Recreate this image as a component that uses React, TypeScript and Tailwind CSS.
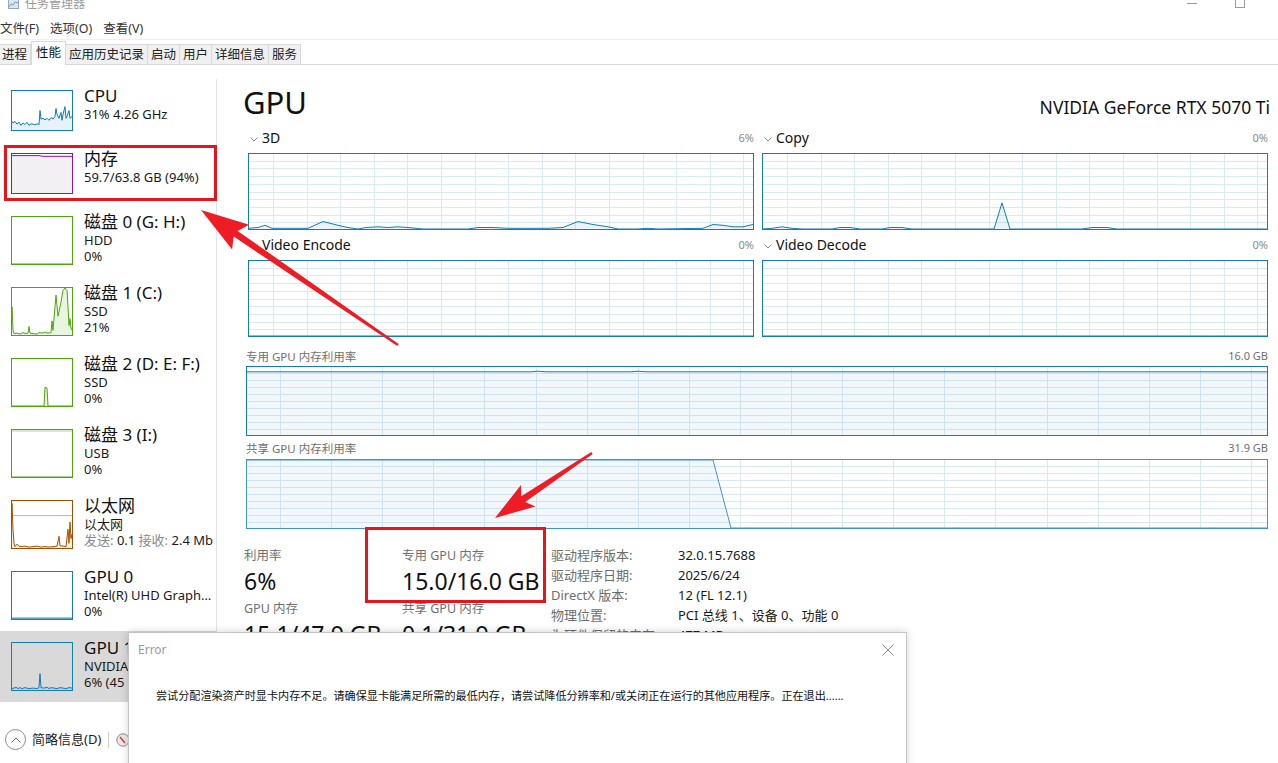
import React from 'react'

type P = [number, number]

const BLUE = '#117dbb'

function Chart({
  w,
  h,
  stroke,
  fill,
  pts,
  colStep = 0,
  colStart = 0,
  rows = 0,
  gridColor = '#d9eaf4',
  refLine,
}: {
  w: number
  h: number
  stroke: string
  fill: string
  pts: P[]
  colStep?: number
  colStart?: number
  rows?: number
  gridColor?: string
  refLine?: number
}) {
  const y = (v: number) => h - 1 - (v / 100) * (h - 2)
  const line = pts.map(([x, v], i) => `${i ? 'L' : 'M'}${x},${y(v).toFixed(1)}`).join(' ')
  const area = `${line} L${pts[pts.length - 1][0]},${h - 1} L${pts[0][0]},${h - 1} Z`
  const vx: number[] = []
  if (colStep) for (let x = colStart; x < w - 1; x += colStep) vx.push(Math.round(x) + 0.5)
  const hy: number[] = []
  for (let i = 1; i < rows; i++) hy.push(Math.round((i * h) / rows) + 0.5)
  return (
    <svg width={w} height={h} className="block shrink-0">
      {vx.map(x => (
        <line key={'v' + x} x1={x} y1={0} x2={x} y2={h} stroke={gridColor} />
      ))}
      {hy.map(yy => (
        <line key={'h' + yy} x1={0} y1={yy} x2={w} y2={yy} stroke={gridColor} />
      ))}
      {refLine !== undefined && (
        <line x1={0} y1={y(refLine) + 0.5} x2={w} y2={y(refLine) + 0.5} stroke={stroke} strokeOpacity={0.45} />
      )}
      <path d={area} fill={fill} />
      <path d={line} fill="none" stroke={stroke} strokeWidth={1} strokeLinejoin="round" />
      <rect x={0.5} y={0.5} width={w - 1} height={h - 1} fill="none" stroke={stroke} />
    </svg>
  )
}

function SideItem({
  title,
  lines,
  thumb,
  selected,
}: {
  title: string
  lines: React.ReactNode[]
  thumb: React.ReactNode
  selected?: boolean
}) {
  return (
    <div className={`flex items-start py-[11px] pl-[11px] ${selected ? 'bg-[#d9d9d9]' : ''}`}>
      {thumb}
      <div className="ml-[11px] -mt-[4px] min-w-0 flex-1 pr-[2px]">
        <div className="text-[17px] leading-[20px] text-[#111] whitespace-nowrap">{title}</div>
        {lines.map((l, i) => (
          <div key={i} className="text-[13px] leading-[16px] text-[#1a1a1a] whitespace-nowrap overflow-hidden text-ellipsis">
            {l}
          </div>
        ))}
      </div>
    </div>
  )
}

function Chevron() {
  return (
    <svg width="8" height="5" viewBox="0 0 8 5" className="block">
      <path d="M0.5 0.5 L4 4 L7.5 0.5" fill="none" stroke="#8a8a8a" strokeWidth="1" />
    </svg>
  )
}

function EngineBlock({ name, pct, pts }: { name: string; pct: string; pts: P[] }) {
  return (
    <div>
      <div className="flex items-center h-[20px] mb-[5px]">
        <div className="ml-[2px] mr-[4px] mt-[2px]">
          <Chevron />
        </div>
        <span className="text-[14px] leading-[20px] text-[#111]">{name}</span>
        <span className="ml-auto text-[11px] text-[#8a8a8a]">{pct}</span>
      </div>
      <Chart w={506} h={77} stroke={BLUE} fill="rgba(17,125,187,0.09)" pts={pts} colStep={33.6} colStart={25} rows={10} />
    </div>
  )
}

function arrow(t: P, p: P, L: number, W: number, t0: number, t1: number) {
  const dx = p[0] - t[0]
  const dy = p[1] - t[1]
  const len = Math.hypot(dx, dy)
  const ux = dx / len
  const uy = dy / len
  const nx = -uy
  const ny = ux
  const bx = p[0] - ux * L
  const by = p[1] - uy * L
  const pt = (x: number, y: number) => `${x.toFixed(1)},${y.toFixed(1)}`
  return [
    pt(t[0] + nx * t0, t[1] + ny * t0),
    pt(bx + ux * 6 + nx * t1, by + uy * 6 + ny * t1),
    pt(bx + nx * W, by + ny * W),
    pt(p[0], p[1]),
    pt(bx - nx * W, by - ny * W),
    pt(bx + ux * 6 - nx * t1, by + uy * 6 - ny * t1),
    pt(t[0] - nx * t0, t[1] - ny * t0),
  ].join(' ')
}

const flat = (w: number, v = 0): P[] => [
  [0, v],
  [w, v],
]

const cpuPts: P[] = [
  [0, 25], [2, 18], [4, 22], [6, 15], [8, 20], [10, 12], [12, 18], [14, 14], [16, 20], [18, 12], [20, 16], [22, 15],
  [24, 13], [26, 16], [28, 14], [29, 50], [30, 28], [32, 30], [34, 26], [36, 30], [38, 25], [40, 32], [42, 28],
  [44, 35], [45, 55], [46, 40], [48, 30], [50, 45], [51, 25], [52, 40], [54, 60], [55, 30], [56, 35], [58, 50],
  [59, 30], [61, 35],
]

const disk1Pts: P[] = [
  [0, 5], [1, 60], [2, 10], [3, 3], [6, 4], [9, 2], [12, 5], [15, 3], [17, 4], [18, 18], [19, 4], [22, 3], [26, 2],
  [28, 5], [31, 4], [34, 6], [37, 4], [40, 5], [41, 30], [42, 10], [44, 60], [45, 85], [47, 40], [48, 50], [50, 70],
  [52, 95], [54, 100], [56, 95], [57, 60], [58, 20], [59, 35], [60, 15], [61, 10],
]

const ethPts: P[] = [
  [0, 5], [1, 95], [2, 40], [3, 10], [4, 3], [6, 8], [8, 4], [10, 3], [14, 4], [18, 2], [22, 3], [26, 4], [30, 2],
  [34, 3], [38, 2], [42, 3], [46, 4], [48, 25], [49, 5], [52, 4], [55, 3], [57, 40], [58, 10], [59, 55], [60, 20],
  [61, 30],
]

const gpu1Pts: P[] = [
  [0, 3], [3, 4], [5, 6], [7, 3], [9, 5], [11, 3], [14, 5], [16, 4], [18, 3], [22, 4], [26, 3], [28, 5], [29, 35],
  [30, 5], [33, 4], [36, 6], [38, 3], [40, 5], [43, 4], [46, 3], [49, 5], [52, 4], [55, 3], [58, 5], [61, 4],
]

const d3Pts: P[] = [
  [0, 1], [10, 2], [17, 5], [24, 1], [60, 1], [75, 10], [90, 5], [100, 2], [110, 0], [118, 2], [130, 3], [140, 2],
  [150, 3], [160, 2], [175, 0], [220, 0], [230, 2], [245, 2], [260, 1], [275, 1], [290, 1], [300, 1], [315, 2],
  [330, 10], [345, 6], [360, 3], [370, 0], [390, 0], [400, 1], [410, 0], [455, 1], [465, 6], [475, 5], [485, 3],
  [495, 3], [505, 6],
]

const copyPts: P[] = [
  [0, 0], [10, 1], [20, 3], [30, 1], [40, 0], [70, 0], [78, 2], [88, 2], [98, 0], [120, 0], [128, 2], [140, 2],
  [150, 0], [232, 0], [240, 35], [248, 0], [320, 0], [330, 2], [345, 2], [355, 0], [506, 0],
]

const tabs = ['进程', '性能', '应用历史记录', '启动', '用户', '详细信息', '服务']

export default function App() {
  return (
    <div className="relative w-[1278px] h-[763px] overflow-hidden bg-white font-['Noto_Sans','Noto_Sans_CJK_SC',sans-serif] flex flex-col">
      {/* title bar */}
      <div className="h-[19px] flex items-start shrink-0">
        <div className="flex items-center -mt-[4px] pl-[8px]">
          <svg width="11" height="10" viewBox="0 0 11 10" className="mr-[6px]">
            <rect x="0.5" y="0.5" width="10" height="9" fill="#dbe7f0" stroke="#9aa7b3" />
            <path d="M1 8 L3 5 L5 6 L7 3 L10 4" fill="none" stroke="#6f9fc0" />
          </svg>
          <span className="text-[12px] leading-[16px] text-[#9a9a9a]">任务管理器</span>
        </div>
        <div className="ml-auto flex items-start mr-[33px]">
          <div className="mt-[3px] w-[10px] h-px bg-[#9a9a9a]" />
          <div className="ml-[38px] -mt-[2px] w-[10px] h-[10px] border border-[#9a9a9a]" />
        </div>
      </div>

      {/* menu */}
      <div className="h-[21px] flex items-center gap-[11px] text-[12.5px] text-[#333] border-b border-[#efefef] shrink-0">
        <span>文件(F)</span>
        <span>选项(O)</span>
        <span>查看(V)</span>
      </div>

      {/* tabs */}
      <div className="h-[25px] flex items-end border-b border-[#d9d9d9] shrink-0">
        {tabs.map(t =>
          t === '性能' ? (
            <div
              key={t}
              className="relative z-10 -mb-px h-[24px] px-[4px] bg-white border border-b-0 border-[#d9d9d9] text-[12.5px] leading-[22px] text-[#111]"
            >
              {t}
            </div>
          ) : (
            <div
              key={t}
              className="h-[20px] px-[3px] bg-[#f0f0f0] border border-b-0 border-l-0 border-[#d9d9d9] text-[12.5px] leading-[19px] text-[#222] first:pl-[2px]"
            >
              {t}
            </div>
          )
        )}
      </div>

      {/* main */}
      <div className="flex flex-1 min-h-0">
        <div className="w-[217px] shrink-0 pt-[14px]">
          <div className="border-r border-[#e3e3e3]">
            <SideItem
              title="CPU"
              lines={['31%  4.26 GHz']}
              thumb={<Chart w={62} h={41} stroke={BLUE} fill="rgba(17,125,187,0.1)" pts={cpuPts} />}
            />
            <SideItem
              title="内存"
              lines={['59.7/63.8 GB (94%)']}
              thumb={
                <Chart
                  w={62}
                  h={41}
                  stroke="#8b12ae"
                  fill="#f2f0f3"
                  pts={[
                    [0, 96],
                    [28, 96],
                    [32, 94],
                    [62, 94],
                  ]}
                />
              }
            />
            <SideItem
              title="磁盘 0 (G: H:)"
              lines={['HDD', '0%']}
              thumb={<Chart w={62} h={49} stroke="#4da60c" fill="rgba(77,166,12,0.1)" pts={flat(62)} />}
            />
            <SideItem
              title="磁盘 1 (C:)"
              lines={['SSD', '21%']}
              thumb={<Chart w={62} h={49} stroke="#4da60c" fill="rgba(77,166,12,0.12)" pts={disk1Pts} />}
            />
            <SideItem
              title="磁盘 2 (D: E: F:)"
              lines={['SSD', '0%']}
              thumb={
                <Chart
                  w={62}
                  h={49}
                  stroke="#4da60c"
                  fill="rgba(77,166,12,0.12)"
                  pts={[
                    [0, 0],
                    [33, 0],
                    [34, 40],
                    [36, 38],
                    [37, 0],
                    [62, 0],
                  ]}
                />
              }
            />
            <SideItem
              title="磁盘 3 (I:)"
              lines={['USB', '0%']}
              thumb={<Chart w={62} h={49} stroke="#4da60c" fill="rgba(77,166,12,0.1)" pts={flat(62)} refLine={99} />}
            />
            <SideItem
              title="以太网"
              lines={[
                '以太网',
                <span key="n" className="text-[#8a8a8a]">
                  发送: <span className="text-[#1a1a1a]">0.1</span> 接收: <span className="text-[#1a1a1a]">2.4 Mb</span>
                </span>,
              ]}
              thumb={<Chart w={62} h={49} stroke="#a74f01" fill="rgba(167,79,1,0.08)" pts={ethPts} refLine={70} />}
            />
            <SideItem
              title="GPU 0"
              lines={['Intel(R) UHD Graphics', '0%']}
              thumb={<Chart w={62} h={49} stroke={BLUE} fill="rgba(17,125,187,0.25)" pts={flat(62, 2)} />}
            />
            <SideItem
              title="GPU 1"
              lines={['NVIDIA GeForce RTX 5070 Ti', '6% (45 °C)']}
              thumb={<Chart w={62} h={49} stroke={BLUE} fill="rgba(17,125,187,0.1)" pts={gpu1Pts} />}
              selected
            />
          </div>
        </div>

        {/* detail panel */}
        <div className="flex-1 min-w-0 pl-[26px] pr-[8px] pt-[22px]">
          <div className="flex items-baseline">
            <span className="text-[31px] leading-[31px] text-[#111]">GPU</span>
            <span className="ml-auto text-[17.5px] text-[#111]">NVIDIA GeForce RTX 5070 Ti</span>
          </div>

          <div className="ml-[5px] mr-[2px] mt-[8px] grid grid-cols-2 gap-x-[8px] gap-y-[5px]">
            <EngineBlock name="3D" pct="6%" pts={d3Pts} />
            <EngineBlock name="Copy" pct="0%" pts={copyPts} />
            <EngineBlock name="Video Encode" pct="0%" pts={flat(506)} />
            <EngineBlock name="Video Decode" pct="0%" pts={flat(506)} />
          </div>

          <div className="ml-[3px] mr-[2px]">
            <div className="mt-[11px] mb-[2px] flex h-[16px] items-center text-[11.5px] text-[#707070]">
              <span>专用 GPU 内存利用率</span>
              <span className="ml-auto text-[11px]">16.0 GB</span>
            </div>
            <Chart
              w={1022}
              h={70}
              stroke={BLUE}
              fill="rgba(17,125,187,0.06)"
              pts={[
                [0, 93],
                [285, 93],
                [292, 93.8],
                [300, 93],
                [385, 93],
                [392, 93.8],
                [400, 93],
                [1022, 93],
              ]}
              colStep={51.1}
              colStart={34}
              rows={10}
            />
            <div className="mt-[4px] mb-[3px] flex h-[16px] items-center text-[11.5px] text-[#707070]">
              <span>共享 GPU 内存利用率</span>
              <span className="ml-auto text-[11px]">31.9 GB</span>
            </div>
            <Chart
              w={1022}
              h={70}
              stroke="#3f95cf"
              fill="rgba(17,125,187,0.06)"
              pts={[
                [0, 100],
                [467, 100],
                [485, 0],
                [1022, 0],
              ]}
              colStep={51.1}
              colStart={34}
              rows={10}
            />
          </div>

          <div className="ml-[1px] mt-[17px] flex items-start">
            <div className="w-[158px] pt-[1px]">
              <div className="text-[12.5px] leading-[18px] text-[#707070]">利用率</div>
              <div className="mt-[2px] text-[23px] leading-[28px] text-[#111]">6%</div>
              <div className="mt-[5px] text-[12.5px] leading-[18px] text-[#707070]">GPU 内存</div>
              <div className="mt-[2px] text-[23px] leading-[28px] text-[#111]">15.1/47.9 GB</div>
            </div>
            <div className="w-[149px] pt-[1px]">
              <div className="text-[12.5px] leading-[18px] text-[#707070]">专用 GPU 内存</div>
              <div className="mt-[2px] text-[23px] leading-[28px] text-[#111]">15.0/16.0 GB</div>
              <div className="mt-[5px] text-[12.5px] leading-[18px] text-[#707070]">共享 GPU 内存</div>
              <div className="mt-[2px] text-[23px] leading-[28px] text-[#111]">0.1/31.9 GB</div>
            </div>
            <div className="-mt-[1px] grid grid-cols-[127px_1fr] text-[13px] leading-[20px]">
              <span className="text-[#6d6d6d]">驱动程序版本:</span>
              <span className="text-[#1a1a1a]">32.0.15.7688</span>
              <span className="text-[#6d6d6d]">驱动程序日期:</span>
              <span className="text-[#1a1a1a]">2025/6/24</span>
              <span className="text-[#6d6d6d]">DirectX 版本:</span>
              <span className="text-[#1a1a1a]">12 (FL 12.1)</span>
              <span className="text-[#6d6d6d]">物理位置:</span>
              <span className="text-[#1a1a1a]">PCI 总线 1、设备 0、功能 0</span>
              <span className="text-[#6d6d6d]">为硬件保留的内存:</span>
              <span className="text-[#1a1a1a]">477 MB</span>
            </div>
          </div>
        </div>
      </div>

      {/* footer */}
      <div className="h-[47px] shrink-0 flex items-center pl-[5px]">
        <div className="w-[21px] h-[21px] rounded-full border border-[#8a8a8a] flex items-center justify-center">
          <svg width="10" height="6" viewBox="0 0 10 6">
            <path d="M0.5 5.5 L5 1 L9.5 5.5" fill="none" stroke="#6a6a6a" strokeWidth="1" />
          </svg>
        </div>
        <span className="ml-[6px] text-[13px] text-[#1a1a1a]">简略信息(D)</span>
        <div className="ml-[7px] w-px h-[16px] bg-[#cfcfcf]" />
        <svg width="14" height="14" viewBox="0 0 14 14" className="ml-[7px]">
          <circle cx="7" cy="7" r="6.2" fill="#e9e9e9" stroke="#8a8a8a" />
          <path d="M4 4 L9 10" stroke="#d23a2a" strokeWidth="1.4" />
        </svg>
        <span className="ml-[6px] text-[13px] text-[#1a1a1a]">打开资源监视器</span>
      </div>

      {/* error dialog */}
      <div className="absolute left-[128px] top-[632px] w-[779px] h-[150px] bg-white border border-[#c4c4c4] shadow-[0_0_8px_rgba(0,0,0,0.18)]">
        <div className="flex items-start pl-[9px] pt-[9px] pr-[12px]">
          <span className="text-[12px] leading-[16px] text-[#9a9a9a]">Error</span>
          <svg width="12" height="12" viewBox="0 0 12 12" className="ml-auto mt-[2px]">
            <path d="M0.5 0.5 L11.5 11.5 M11.5 0.5 L0.5 11.5" stroke="#8a8a8a" strokeWidth="1" />
          </svg>
        </div>
        <div className="mt-[30px] pl-[27px] text-[11.1px] leading-[16px] text-[#111] whitespace-nowrap">
          尝试分配渲染资产时显卡内存不足。请确保显卡能满足所需的最低内存，请尝试降低分辨率和/或关闭正在运行的其他应用程序。正在退出......
        </div>
      </div>

      {/* red annotations */}
      <svg width="1278" height="763" className="absolute left-0 top-0 pointer-events-none">
        <rect x="5.5" y="146.5" width="210" height="53" fill="none" stroke="#e8141c" strokeWidth="3" />
        <rect x="366.5" y="528.5" width="178" height="73" fill="none" stroke="#e8141c" strokeWidth="3" />
        <polygon points={arrow([398, 345], [201, 210], 48, 15, 1.2, 3.5)} fill="#ee1c25" />
        <polygon points={arrow([592, 453], [495, 518], 40, 13, 1.2, 3.5)} fill="#ee1c25" />
      </svg>
    </div>
  )
}
